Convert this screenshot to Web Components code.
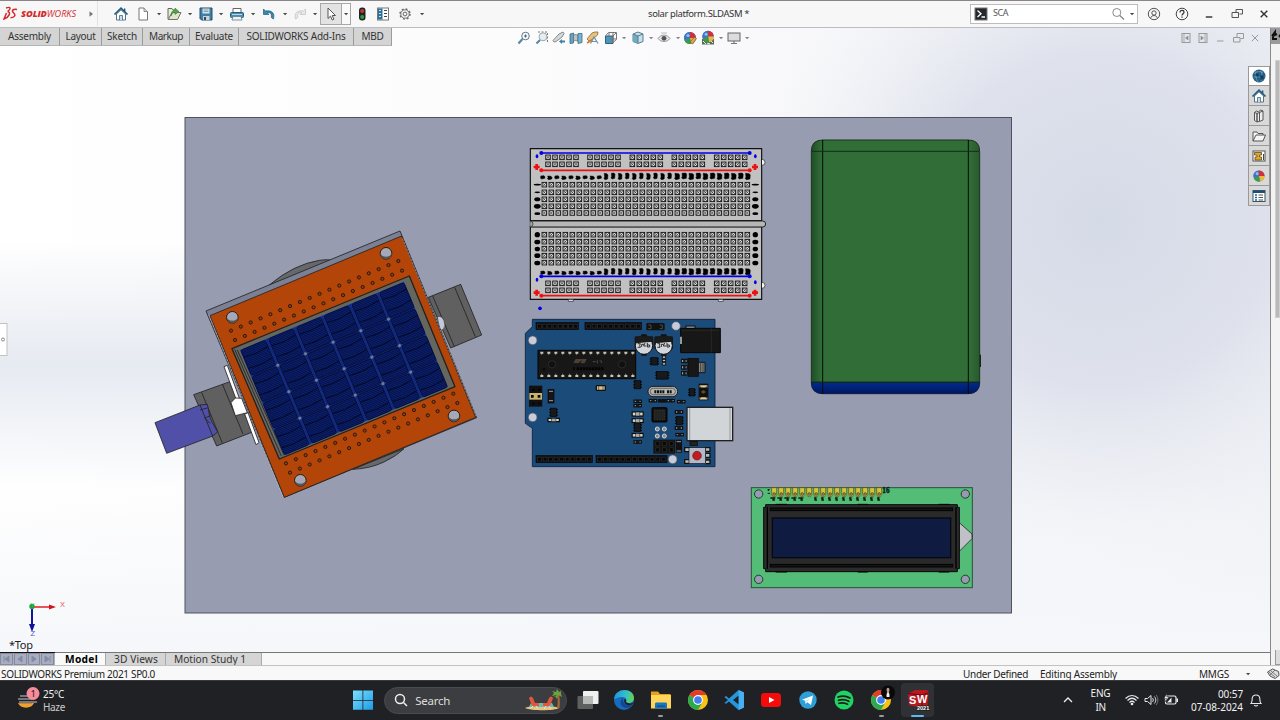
<!DOCTYPE html>
<html lang="en">
<head>
<meta charset="utf-8">
<title>solar platform.SLDASM - SOLIDWORKS</title>
<style>
html,body{margin:0;height:100%;overflow:hidden;font-family:"Noto Sans","Open Sans",sans-serif;font-size:10.5px;color:#222}
</style>
</head>
<body>
<cad-app></cad-app>
<script>
const define = (name, css, html, init) => {
  const t = document.createElement('template');
  t.innerHTML = `<style>:host{display:block;box-sizing:border-box}*{box-sizing:border-box}${css}</style>${typeof html === 'string' ? html : ''}`;
  customElements.define(name, class extends HTMLElement {
    connectedCallback() {
      if (this.shadowRoot) return;
      const r = this.attachShadow({ mode: 'open' });
      r.append(t.content.cloneNode(true));
      if (typeof html === 'function') r.innerHTML += html(this);
      if (init) init(this, r);
    }
  });
};

/* Label whose tracking is adjusted so that it takes a given width. */
define('ui-label', ':host{display:inline-block;white-space:nowrap;line-height:1.2}', '<span><slot></slot></span>', (el, r) => {
  const w = +el.getAttribute('w');
  if (!w) return;
  const nat = r.querySelector('span').getBoundingClientRect().width;
  el.style.letterSpacing = ((w - nat) / el.textContent.length) + 'px';
});

/* ---------- icons ---------- */
const ball = `<circle cx="9" cy="9" r="6" fill="#3f74c9"/><path d="M9 9V3a6 6 0 0 1 6 6z" fill="#d32f3a"/><path d="M9 9h6a6 6 0 0 1-5 5.900z" fill="#e8b93a"/><path d="M9 9L3.300 11A6 6 0 0 0 10 14.900z" fill="#3c9a4a"/><path d="M9 9V3a6 6 0 0 0-5.800 7.500z" fill="#3f74c9"/><circle cx="7" cy="6.500" r="1.600" fill="#fff" opacity=".5"/>`;
const chrome = `<circle cx="10" cy="10" r="10" fill="#fbc116"/><path d="M10 10L1.400 5A10 10 0 0 0 10 20l4.300-7.500z" fill="#2da94f"/><path d="M1.400 5A10 10 0 0 1 18.600 5H10v5z" fill="#e33b2e"/><circle cx="10" cy="10" r="4.900" fill="#fff"/><circle cx="10" cy="10" r="3.800" fill="#3f7ff0"/>`;
const ICONS = {
  home: `<path d="M4.500 9v6h9V9L9 4.800z" fill="#fff" stroke="#5d6f7c"/><path d="M2.500 9.500L9 3.200l6.500 6.300" fill="none" stroke="#1d5a80" stroke-width="1.700"/><path d="M7.500 15v-4.500h3V15" fill="#c5dcea" stroke="#356b8c" stroke-width=".8"/><path d="M12.600 3.500v3" stroke="#1d5a80" stroke-width="1.500"/>`,
  doc: `<path d="M5 3h5l3.500 3.500V15H5z" fill="#fff" stroke="#777"/><path d="M10 3v3.500h3.500" fill="#ddd" stroke="#777" stroke-width=".8"/>`,
  open: `<path d="M3 14V3.500h4L8 5h3v3" fill="#e9ead5" stroke="#666"/><path d="M3.200 14.500L7 7.500h9l-3.500 7z" fill="#dfe3cf" stroke="#707560"/><path d="M6 11c.5-4.500 2-6 4-6V3l4 3.500-4 3V7.500c-2 0-3 1-4 3.500z" fill="#51a545" stroke="#30702c" stroke-width=".5"/>`,
  save: `<path d="M3 3h12v12H4.500L3 13.500z" fill="#3f7ea5" stroke="#244f6d"/><rect x="5.500" y="3.500" width="7" height="5" fill="#d6e2e9"/><path d="M6.500 5h5M6.500 6.500h5" stroke="#6d8797" stroke-width=".7"/><rect x="6" y="11" width="6.500" height="4" fill="#c9d3d9"/><rect x="7" y="12" width="2" height="3" fill="#264c66"/>`,
  print: `<path d="M5 8V3.500h8V8" fill="#fff" stroke="#666"/><rect x="2.500" y="7.500" width="13" height="5" rx="1" fill="#4b8cb0" stroke="#255b7c"/><path d="M5 11.500h8l1 3.500H4z" fill="#eef3f5" stroke="#5f7d8e" stroke-width=".8"/><path d="M4 9.500h10" stroke="#b9d7e6"/>`,
  undo: `<path d="M3.500 4v5.500h5.500L7.300 7.900c3-.9 4.700.8 4 4.600l2 1.500c2-5-1-9.300-7.700-7.900z" fill="#3c86b0" stroke="#205d82" stroke-width=".7"/>`,
  redo: `<path d="M14.500 4v5.500H9l1.700-1.600c-3-.9-4.700.8-4 4.600l-2 1.500c-2-5 1-9.300 7.700-7.900z" fill="#e8e8e8" stroke="#c4c4c4" stroke-width=".8"/>`,
  cursor: `<path d="M6 3v10.500l2.500-2.400 1.700 3.900 1.700-.8-1.700-3.700H13.500z" fill="#fff" stroke="#555"/>`,
  traffic: `<rect x="6" y="2.500" width="6.500" height="13" rx="3" fill="#222"/><circle cx="9.200" cy="6" r="2" fill="#c2372d"/><circle cx="9.200" cy="12" r="2" fill="#2c9d4a"/>`,
  list: `<rect x="3.500" y="3" width="11" height="12" fill="#fff" stroke="#777"/><rect x="4" y="3.500" width="4.500" height="11" fill="#2d7099"/><path d="M10 5.500h3M10 8.500h3M10 11.500h3" stroke="#444"/><path d="M5 5.500h2M5 8.500h2M5 11.500h2" stroke="#cfe3ee"/>`,
  gear: `<circle cx="9" cy="9" r="5" fill="none" stroke="#666" stroke-width="1.500" stroke-dasharray="1.900 2.027"/><circle cx="9" cy="9" r="4.200" fill="#f7f7f7" stroke="#666" stroke-width=".9"/><circle cx="9" cy="9" r="1.900" fill="none" stroke="#666"/>`,
  caret: `<path d="M7 8h4.200L9.100 10.200z" fill="#444"/>`,
  tri: `<path d="M7.500 6.200L11 9l-3.500 2.800z" fill="#777"/>`,
  prompt: `<rect x="3" y="3" width="12" height="12" fill="#24282b" stroke="#777"/><path d="M5.500 5.500L9 8.700 5.500 12M9.500 12H13" fill="none" stroke="#fff" stroke-width="1.300"/>`,
  mag: `<circle cx="7.800" cy="7.500" r="4" fill="none" stroke="#888"/><path d="M10.800 10.500L15 14.500" stroke="#888" stroke-width="1.300"/>`,
  user: `<circle cx="9" cy="9" r="5.700" fill="none" stroke="#555"/><circle cx="9" cy="8" r="2.200" fill="none" stroke="#555"/><path d="M5.800 12.800c.8-3 5.600-3 6.400 0" fill="none" stroke="#555"/>`,
  help: `<circle cx="9" cy="9" r="5.800" fill="none" stroke="#444"/><path d="M7 7.500c0-2.800 4-2.600 4-.2 0 1.500-2 1.500-2 3.200M9 11.500v1.200" fill="none" stroke="#333" stroke-width="1.200"/>`,
  min: `<path d="M5.800 12h6.500" stroke="#444" stroke-width="1.600"/>`, rest: `<path d="M8 7.500V4.500h6.500v4.500h-3M4 7.500h6.500v5H4z" fill="none" stroke="#555"/>`,
  close: `<path d="M5.700 5.700l6.600 6.600M12.300 5.700l-6.600 6.600" stroke="#333" stroke-width="1.400"/>`,
  min2: `<path d="M6 12h6.500" stroke="#999"/>`, rest2: `<path d="M8 8V4.500h6.500v5h-3M4.500 8.500h6.500v4.500H4.500z" fill="none" stroke="#999"/>`,
  close2: `<path d="M5.800 5.800l6.400 6.400M12.200 5.800l-6.400 6.400" stroke="#999"/>`,
  dockl: `<rect x="5" y="4.500" width="8" height="9" fill="none" stroke="#999"/><path d="M7 4.500v9M11 7L8.500 9l2.500 2z" fill="#888" stroke="#999" stroke-width=".8"/>`,
  dockr: `<rect x="5" y="4.500" width="8" height="9" fill="none" stroke="#999"/><path d="M11 4.500v9M7 7l2.500 2L7 11z" fill="#888" stroke="#999" stroke-width=".8"/>`,
  zfit: `<path d="M3.500 14.500l4-4.500" stroke="#5589a5" stroke-width="2.200"/><circle cx="10.500" cy="7" r="3.800" fill="#f4f8fa" stroke="#678"/><path d="M9 7h3M10.500 5.500v3" stroke="#456" stroke-width=".9"/>`,
  zarea: `<path d="M5 3h9.500v10" fill="none" stroke="#777" stroke-dasharray="2 1.500"/><path d="M3.500 14.500l3.500-3.500" stroke="#5589a5" stroke-width="2.200"/><circle cx="10" cy="7.800" r="4" fill="#e3edf2" stroke="#9aa8b0"/>`,
  prev: `<path d="M3 11.500L9 5l4-2 1 1.500L12 8l-6 4.500-2 .5z" fill="#d5d9db" stroke="#888"/><path d="M9 12.500L12 10v1.500h3v2h-3V15z" fill="#4182a5"/>`,
  section: `<path d="M3 5l3.500-1v10L3 14.500z" fill="#62a4c2" stroke="#376b86" stroke-width=".8"/><path d="M6.500 6c2-1 3 0 4.500 0v6c-2 0-2.500-1-4.500 0z" fill="#b8c4ca" stroke="#666" stroke-width=".7"/><path d="M11 4.500h4v9l-4 1z" fill="#78b6d0" stroke="#376b86" stroke-width=".8"/>`,
  dyn: `<path d="M3 10l5-6 3-1 3 0-.500 3L9 10l-4 2z" fill="#edc078" stroke="#907450" stroke-width=".9"/><path d="M6.500 14.500l3.500-6.500 4 6.500M8 12.500h5" fill="none" stroke="#7190a0" stroke-width="1.200"/><path d="M3 14l5-3" stroke="#d77a36" stroke-width="1.500"/>`,
  orient: `<path d="M3.500 7h7.500v7.500H3.500z" fill="#4c95b8" stroke="#30627d"/><path d="M3.500 7l3-3.500h8v7l-3.500 3M7 4v3M14 4l-3 3M8 10h6M11 4v10" fill="none" stroke="#777"/>`,
  cube: `<path d="M4 5l5-2 5 2v7.500l-5 2-5-2z" fill="#c5e0eb" stroke="#5a7d8d"/><path d="M4 5l5 2v7.500l-5-2z" fill="#70abc5"/><path d="M4 5l5 2 5-2M9 7v7" fill="none" stroke="#5a7d8d"/>`,
  eye: `<path d="M3 9.500c3-4.500 9-4.500 12 0-3 4-9 4-12 0z" fill="#e4e4e4" stroke="#999"/><circle cx="9" cy="9.300" r="2.400" fill="#555"/><path d="M6 4h6" stroke="#bbb"/>`,
  app: ball + `<path d="M9 13l4.500-5 2 1.500-4 5.500z" fill="#d6aa54" stroke="#765a29" stroke-width=".7"/>`,
  scene: `<path d="M3 10h12v5.500H3z" fill="#5c6e59"/><path d="M4 12l3 3M8 14l3 1M12 12l2 2" stroke="#eee"/><g transform="translate(.5 -1)scale(.95)">${ball}</g>`,
  monitor: `<rect x="3" y="4" width="12" height="8" fill="#dcdcdc" stroke="#666"/><path d="M9 12v2.500M6 14.500h6" stroke="#777" stroke-width="1.200"/>`,
  globe: `<circle cx="9" cy="9" r="6.500" fill="#245f84"/><path d="M4 7c2-3 7-3 9-1M3.500 10h11M6 4c-1 4 0 8 2 11M11 4c2 4 1 8 0 10" fill="none" stroke="#83b1cc" stroke-width=".6"/><path d="M5 8l2-2 2 2-1 2zM10 9l3-1 1 3-3 2z" fill="#134060"/>`,
  library: `<path d="M4.500 5.500l2.500 1v8.500l-2.500-1.500zM7 6.500l2.500-1v8.500l-2.500 1zM9.500 5.500l3.500-1.500v9l-3.500 1.500z" fill="#eee" stroke="#555"/><path d="M4.500 5.500l2-1.500 2 1 2-2 2.500 1" fill="none" stroke="#555"/>`,
  folder: `<path d="M3 14V5h4l1 1.500h5V8M3 14l3-6h9.500L13 14z" fill="#f5f5f5" stroke="#555"/>`,
  palette: `<rect x="3" y="4" width="12" height="10" fill="#fff" stroke="#555"/><path d="M4.500 5.500h7v2.500h-2v2h2v3H5v-3h2v-2H4.500z" fill="#e6aa2a" stroke="#5c4820" stroke-width=".8"/><path d="M13.500 7v6" stroke="#444"/>`,
  ball: `<g transform="translate(.7 .7)scale(.92)">${ball}</g>`,
  props: `<rect x="3" y="3.500" width="12" height="11" fill="#fff" stroke="#31566d"/><path d="M3 5h12" stroke="#1f4f6e" stroke-width="2"/><path d="M5 8h2M5 10.500h2M5 13h2" stroke="#1f6b98" stroke-width="1.700"/><path d="M8.500 8H13M8.500 10.500H13M8.500 13H13" stroke="#555"/>`,
  tag: `<path d="M3.500 7l5-3 6 2.500.5 4-4 3-5-2.500z" fill="#ddd" stroke="#555"/><path d="M5 7l6 5M7 6l6 5M6 10l5-5" stroke="#666" stroke-width=".8"/>`,
  chev: `<path d="M5 11l4-4 4 4" fill="none" stroke="#eee" stroke-width="1.300"/>`,
  wifi: `<path d="M2.500 7.500c4-4 9-4 13 0M4.500 9.500c3-3 6-3 9 0M6.500 11.500c1.500-1.500 3.500-1.500 5 0" fill="none" stroke="#e8e8e8" stroke-width="1.200"/><circle cx="9" cy="13" r="1.300" fill="#eee"/>`,
  vol: `<path d="M3 7.500h2.500L9 4.500v9L5.500 10.500H3z" fill="none" stroke="#e8e8e8"/><path d="M10.500 7c1 1 1 3 0 4M12.300 5.500c2 2 2 5 0 7" fill="none" stroke="#ddd"/><path d="M14 4c2.500 3 2.500 7 0 10" fill="none" stroke="#777"/>`,
  batt: `<rect x="3.500" y="5" width="10.500" height="8" rx="1.500" fill="none" stroke="#eee" stroke-width="1.200"/><path d="M14.500 7.500h1.500V11h-1.500z" fill="#eee"/><path d="M9.500 6.500v5H5z" fill="#eee"/><path d="M5 2.500L2 7.500h2.500L3 11l4-5H4.700z" fill="#fff" stroke="#202124" stroke-width=".5"/>`,
  bell: `<path d="M4 12.500c1.300-1.500 1-3 1.200-5.200.5-4.500 7.100-4.500 7.600 0 .2 2.200-.1 3.700 1.200 5.200zM7.300 14c.6 1.300 2.800 1.300 3.400 0" fill="none" stroke="#e8e8e8" stroke-width="1.100"/>`
};
const BIG = {
  start: `<defs><linearGradient id="g" x2="1" y2="1"><stop stop-color="#7be0fb"/><stop offset="1" stop-color="#1c9bea"/></linearGradient></defs><path d="M0 .5h9.500V10H0zM10.300.5H20V10h-9.700zM0 10.800h9.500v9H0zM10.300 10.800H20v9h-9.700z" fill="url(#g)"/>`,
  tasks: `<rect x="5" y="1" width="15.500" height="13" rx="1" fill="#f0f0f0"/><rect x="-.5" y="6" width="15.500" height="13" rx="1" fill="#666" opacity=".9"/><rect x="5" y="6" width="10" height="8" fill="#b9b9b9"/>`,
  edge: `<defs><linearGradient id="g" x1="0" y1=".2" x2="1" y2=".4"><stop stop-color="#2290dc"/><stop offset=".6" stop-color="#35c1c8"/><stop offset="1" stop-color="#5fd35b"/></linearGradient></defs><circle cx="10" cy="10" r="10" fill="#176bbd"/><path d="M0 10C0-3 20-3 20 8c0 5-6 6-8 4 1-2 .5-5-3.500-5C4 7 0 9 0 10z" fill="url(#g)"/><path d="M9 8c-5 4-2 10 4 10 3 0 5-2 5.500-3.500C14 16.500 8 14 9 8z" fill="#114a91"/><path d="M12 12c2 2 5.500 1.500 8 .5-1 2-4 3-6.500 2.500-3-.7-4-4-3-6 1.500 0 2 1.500 1.500 3z" fill="#202124"/>`,
  files: `<path d="M0 1.500h7l2 2.500h10.500V18H0z" fill="#e3a21a"/><path d="M0 5h20v13.500H0z" fill="#ffd45a"/><path d="M4 18.500v-4.500c0-1 .7-1.500 1.500-1.500h9c.8 0 1.500.5 1.500 1.500v4.500z" fill="#1b75bd"/><path d="M6 15.500h8v1.500H6z" fill="#0d5797"/>`,
  chrome,
  code: `<path d="M14.500 0L20 2.500v15L14.500 20 5 11.500l-3 2.300L.3 13 4 10 .3 7 2 6l3 2.500zM14.700 5.500L9 10l5.700 4.500z" fill="#2496dd" fill-rule="evenodd"/><path d="M14.700 0L20 2.500v15L14.700 20z" fill="#45b0f2"/>`,
  youtube: `<rect y="3" width="20" height="14" rx="3.500" fill="#f60b0b"/><path d="M8 7l5.500 3L8 13z" fill="#fff"/>`,
  telegram: `<circle cx="10" cy="10" r="8.700" fill="#2f9fd8"/><path d="M4 9.800L15 5.500l-2 9.500-3.700-2.700L7.500 14l-.3-3.200z" fill="#fff"/><path d="M7.500 11l5.300-3.500-4 4z" fill="#b7dcf0"/>`,
  spotify: `<circle cx="10" cy="10" r="9.500" fill="#20d363"/><path d="M4 7c4-1.300 8.500-1 12 1M4.500 10.300c3.500-1 7-.7 10.300 1M5 13.300c3-.8 6-.6 8.500.9" fill="none" stroke="#171b19" stroke-width="1.700" stroke-linecap="round"/>`,
  chrome2: chrome + `<circle cx="17" cy="2.500" r="7" fill="#090909"/><path d="M15.500 0c0-3 3-3 3 0l-.5 2 .5 4h-3l.5-4z" fill="#b69b91"/><path d="M16 3h2l.5 4h-3z" fill="#eee"/>`,
  sw: `<path d="M0 3.500L7 0h12.500l1 3-1 13-5 2.500L1 15z" fill="#b81820"/><path d="M0 3.500L14 5l6-2M14 5v12" fill="none" stroke="#63070d"/><text x="1" y="14" font-family="Liberation Sans" font-weight="700" font-size="11" fill="#fff">S</text><text x="9" y="13" font-family="Liberation Sans" font-weight="700" font-size="11" fill="#fff">W</text><text x="9" y="19.500" font-family="Liberation Sans" font-weight="700" font-size="5.500" fill="#fff" stroke="#222" stroke-width="1.500" paint-order="stroke">2021</text>`,
  beach: `<path d="M-7 18c5-3 28-3 34 0-4 3-28 3-34 0z" fill="#e9c07c"/><path d="M-1 13h21l2 4H-3z" fill="#63bcbb"/><path d="M25 18c1-5 1-8 0-13l2-.5c1 5 1 9 .5 13.500z" fill="#a66c34"/><path d="M25 5L20 6l2-3-2-2 4 1 1-3 2 3 2-1v3l1 3-4-2-1 4-2-3-2 2z" fill="#6aa33b"/><path d="M-3 8q2-3 4 0l2 5 4 0 0 3H0zM21 8q-2-3-4 0l-2 5h-4v3h7z" fill="#e2563b"/><path d="M-2 19l3-3M6 19l-2-3M19 19l-2-3M12 19l2-3" stroke="#efe3cf"/>`
};
define('sw-icon', ':host{display:flex;justify-content:center;align-items:center;flex:none;width:18px}svg{display:block;flex:none;overflow:visible}', el =>
  `<svg width="18" height="18" viewBox="0 0 18 18">${ICONS[el.getAttribute('name')]}</svg>`, el => { if (el.getAttribute('w')) el.style.width = el.getAttribute('w') + 'px'; });

const icons = s => s.split(' ').map(p => { const [n, w] = p.split(':'); return `<sw-icon name="${n}" w="${w}"></sw-icon>`; }).join('');

define('title-bar', `
:host{display:flex;height:28px;background:#f7f7f7;border-top:1px solid #89868a;border-bottom:1px solid #bdbdc0;align-items:center;color:#333;padding-bottom:1px}
.brand{display:flex;flex:none;width:98px;height:25px;align-items:center;border-right:1px solid #e3e3e3;padding-left:3px;color:#d4282c;font:italic 9.200px "Open Sans",sans-serif}
.brand b{font-weight:800}.brand svg{margin-right:3px;flex:none}.brand ui-label{flex:none;width:54px}.brand sw-icon{margin-left:7px}
.tools{display:flex;flex:none;align-items:center;height:22px;padding-left:12px}
.sel{display:flex;height:22px;border:1px solid #a8a8a8;background:#e3e3e3;width:31px}.sel sw-icon+sw-icon{border-left:1px solid #a8a8a8;background:#fafafa}
.name{margin-left:221px;width:322px;flex:none;font-size:9.500px}
.search{display:flex;flex:none;align-items:center;width:168px;height:20px;border:1px solid #bdbdbd;background:#fff;font-size:9px;color:#555;padding-left:1px}
.search ui-label{margin:0 101px 0 3px;width:15px}
`, `<div class="brand"><svg width="15" height="15" viewBox="0 0 15 15"><path d="M3 2c4-1.500 6 0 1.500 3.500M4.500 5.500c4 .5 1.500 6-3.500 7.500L3.500 7M14 3.500c-3.500-1-6 1-3.500 3.200s1.500 5-3 5" fill="none" stroke="#d4282c" stroke-width="1.500"/></svg><ui-label w="55"><b>SOLID</b>WORKS</ui-label><sw-icon name="tri" w="18"></sw-icon></div>
<div class="tools">${icons('home:22 doc:22 caret:10 open:20 caret:11 save:21 caret:10 print:22 caret:10 undo:21 caret:11 redo:20 caret:10')}<div class="sel">${icons('cursor:20 caret:9')}</div>${icons('traffic:21 list:22 gear:22 caret:11')}</div>
<div class="name"><ui-label w="101">solar platform.SLDASM *</ui-label></div>
<div class="search"><sw-icon name="prompt" w="18"></sw-icon><ui-label w="15">SCA</ui-label>${icons('mag:18 caret:10')}</div>
${icons('user:31 help:25 min:29 rest:27 close:27')}`);

define('command-tabs', `
:host{display:flex;height:18px}
div{display:flex;align-items:center;justify-content:center;background:#d4d4d4;border-right:1px solid #9b9b9b;border-bottom:1px solid #b5b5b5;color:#333;font-size:10px;padding-bottom:1px}`,
  [['Assembly', 60, 43], ['Layout', 42, 30], ['Sketch', 41, 30], ['Markup', 47, 34], ['Evaluate', 49, 38], ['SOLIDWORKS Add-Ins', 115, 99], ['MBD', 38, 22]]
    .map(([t, w, l]) => `<div style="width:${w}px"><ui-label w="${l}">${t}</ui-label></div>`).join(''));

define('view-toolbar', ':host{display:flex;height:20px;align-items:center}.mute{display:flex;opacity:.65}',
  icons('zfit:18 zarea:17 prev:17 section:17 dyn:18 orient:18') + `<span class="mute">${icons('caret:8')}</span>` + icons('cube:19') + `<span class="mute">${icons('caret:7')}</span>` + icons('eye:20') + `<span class="mute">${icons('caret:7')}</span>` + icons('app:18 scene:17') + `<span class="mute">${icons('caret:9')}</span>` + icons('monitor:18') + `<span class="mute">${icons('caret:8')}</span>`);

define('task-pane', `:host{width:22px;border:1px solid #999;border-bottom:0}div{height:20px;background:#d9d9d9;border-bottom:1px solid #999;display:flex;justify-content:center;align-items:center}div:first-of-type{background:#fff;height:19px}`,
  'globe home library folder palette ball props'.split(' ').map(n => `<div><sw-icon name="${n}"></sw-icon></div>`).join(''));

/* ---------- model parts, drawn at three units per pixel ---------- */
const range = n => [...Array(n).keys()];
const part = (x, y, s) => `<g transform="translate(${x} ${y}) scale(.33333)">${s}</g>`;

function solar() {
  const row = (x1, y1, x2, y2) => range(18).map(i => `<circle cx="${x1 + (x2 - x1) * i / 17}" cy="${y1 + (y2 - y1) * i / 17}" r="4.800" fill="#8c4218" stroke="#27140a" stroke-width="2.800"/>`).join('');
  let cells = '';
  for (let c = 0; c < 6; c++) for (let r = 0; r < 4; r++) {
    const x = c * 90, y = r * 86;
    cells += `<rect x="${x + 5}" y="${y + 2}" width="80" height="82" rx="7" fill="url(#cell)" stroke="#04092a" stroke-width="2"/>
    <path d="M${x + 6} ${y + 25}l38 3 40-5M${x + 6} ${y + 61}l38 3 40-5" stroke="#02061c" stroke-width="2.500" fill="none"/>`;
  }
  let nodes = '';
  for (let c = 1; c < 6; c++) {
    nodes += `<path d="M${c * 90} 2V340" stroke="#0b1b5e" stroke-width="1.500"/>`;
    for (let r = 1; r < 4; r++) nodes += `<circle cx="${c * 90}" cy="${r * 86}" r="4.500" fill="#777c84"/>`;
  }
  return `<g stroke="#222" stroke-width="2.500" stroke-linejoin="round">
  <path d="M358 195Q430 134 508 121 526 118 542 120L450 190zM608 748Q660 746 702 726 740 708 762 686z" fill="#67686b"/>
  <path d="M835 232L932 193 995 345 902 384z" fill="#606060"/><path d="M914 202L976 350M848 228l65 152" fill="none"/>
  <path d="M862 290q14-4 20 12t-2 26l-10 4z" fill="#c5c9db" stroke-width="1.500"/>
  <path d="M131 524L240 485 310 635 200 678z" fill="#606060"/><path d="M155 517l62 152M217 492l62 150" fill="none"/>
  <path d="M15 608L150 555 172 553 180 592 187 608 203 636 188 648 50 700z" fill="#5050a8"/><path d="M150 555l38 93M150 570l22-6M180 610l-16-16 18-7" fill="none"/>
  <path d="M222 440l10-4 38 104-9 5zM284 582l10-4 33 90-9 6z" fill="#fff"/>
  <path d="M243 548L256 534 275 535 292 578 256 587z" fill="#fff"/>
  <path d="M168 273L750 33 757 50 980 593 403 832z" fill="#7b8095"/>
  <path d="M180 287L755 48 977 592 403 832z" fill="#b34508"/>
  <path d="M176 284L399 830M757 55L978 588" fill="none" stroke="#cdd0da" stroke-width="1.500" stroke-dasharray="8 3"/>
  <path d="M246 386L778 168 915 500 388 717z" fill="#65675f" stroke-width="4"/>
  <path d="M254 388L394 708M262 390L402 704" fill="none" stroke="#222"/></g>
  ${row(243, 332, 745, 123)}${row(255, 360, 756, 152)}${row(408, 730, 910, 521)}${row(420, 758, 922, 549)}
  ${[[247, 292], [708, 100], [912, 588], [451, 781]].map(([x, y]) => `<circle cx="${x}" cy="${y}" r="17.500" fill="#a5a8b8" stroke="#2b1a12" stroke-width="3"/><path d="M${x - 17} ${y}a17 17 0 0 0 34 0a18 15 0 0 1-34 0z" fill="#555"/>`).join('')}
  <g transform="matrix(.923 -.384 .386 .923 267 391)"><path d="M3 0H536V342H3z" fill="#15308e"/>${cells}${nodes}</g>`;
}

function breadboard() {
  const hole = (x, y) => `<use href="#hole" x="${x}" y="${y}"/>`;
  let s = `<path d="M31 26H725V242H31zM31 260H725V478H31z" fill="#c1c1c1" stroke="#111" stroke-width="3.500"/><path d="M31 243H728a9 9 0 0 1 0 18H31z" fill="#b6b6b6" stroke="#222" stroke-width="3"/><path d="M31 244a8 8 0 0 1 0 16" fill="#aaa" stroke="#222" stroke-width="2"/>
  <g fill="#f5f5f5" stroke="#222" stroke-width="2"><path d="M726 58a9 9 0 0 1 0 18M726 427a9 9 0 0 1 0 18M145 479v5h15v-5M595 479v5h15v-5"/></g>`;
  for (const y of [134, 157, 178, 199, 219, 284, 305, 326, 347, 368]) for (let i = 0; i < 30; i++) s += hole(73 + i * 21, y);
  for (const y of [52, 73, 430, 451]) for (const x of [84, 210, 337, 463, 590]) for (let i = 0; i < 5; i++) s += hole(x + i * 21, y);
  for (let i = 0; i < 30; i++) {
    const b = i > 8, w = b ? (i > 18 ? 14 : 11) : 13, h = b ? 16 : 8;
    for (const y of [107, 393]) s += `<path stroke="#000" stroke-width="1.500" d="M${62 + i * 21.200} ${y + (b ? -7 : 1)}l${w - 3} ${i % 2 ? 1 : -1} 3 4-1 ${h - 4}-${w - 4} 2-4-3 2-${h / 3}z"/>`;
  }
  const lab = [[134, 11, 2.500], [157, 9, 2.500], [178, 9, 6], [199, 10, 7], [221, 9, 4], [284, 8, 8], [306, 9, 7], [327, 8, 7], [347, 9, 7], [369, 9, 7]];
  for (const [y, rx, ry] of lab) s += `<ellipse cx="52" cy="${y}" rx="${rx}" ry="${ry}"/><ellipse cx="706" cy="${y}" rx="${rx}" ry="${ry}"/>`;
  for (const [y, c] of [[39, '#0000e6'], [91, '#ee1010'], [409, '#0000e6'], [467, '#ee1010']]) s += `<path d="M64 ${y}H689" stroke="${c}" stroke-width="5"/><circle cx="64" cy="${y}" r="6" fill="${c}"/><circle cx="689" cy="${y}" r="6" fill="${c}"/>`;
  for (const [x, y] of [[50, 81], [705, 81], [50, 458], [705, 458]]) s += `<path d="M${x - 9} ${y}h18M${x} ${y - 9}v18" stroke="#ee1010" stroke-width="8"/>`;
  for (const [x, y] of [[51, 49], [706, 49], [51, 419], [706, 427]]) s += `<ellipse cx="${x}" cy="${y}" rx="4" ry="6" fill="#0000e6"/>`;
  return s + '<circle cx="60" cy="505" r="5.500" fill="#0000e6"/>';
}

function arduino() {
  const strip = (x, y, w, n) => `<rect x="${x}" y="${y}" width="${w}" height="21" fill="#141414" stroke="#050505" stroke-width="2"/>` + range(n).map(i => `<rect x="${x + 5 + i * (w - 3) / n}" y="${y + 5}" width="11" height="11" fill="#070707" stroke="#303030" stroke-width="1.500"/>`).join('');
  const smd = (x, y, w = 24, h = 10, f = '#d8d4c8') => `<rect x="${x - w / 2}" y="${y - h / 2}" width="${w}" height="${h}" fill="${h < 9 ? '#8d98a0' : f}" stroke="#0b0b0b" stroke-width="3.500"/><rect x="${x - w / 5}" y="${y - h / 2}" width="${w / 2.500}" height="${h}" fill="${w > 30 ? '#aaa' : '#1b1b1b'}" stroke="#111" stroke-width="1.500"/>`;
  const ic = (x, y, w, h) => `<path d="M${x - w / 2 - 4} ${y - h / 3}h${w + 8}M${x - w / 2 - 4} ${y}h${w + 8}M${x - w / 2 - 4} ${y + h / 3}h${w + 8}" stroke="#0a0a0a" stroke-width="4"/><rect x="${x - w / 2}" y="${y - h / 2}" width="${w}" height="${h}" fill="#161a1d" stroke="#050505" stroke-width="2"/>`;
  const cap = x => `<rect x="${x - 28}" y="79" width="56" height="38" rx="4" fill="#171717"/><circle cx="${x}" cy="107" r="26" fill="#d3d7dc" stroke="#111" stroke-width="3"/><path d="M${x - 27} 100a27 22 0 0 1 54-5z" fill="#1b1b1b"/><path d="M${x - 19} 101h8l-2 5 2 6h-8M${x - 7} 111v-8h7M${x + 3} 99l-4 9h8M${x + 10} 99v12h7v-6h-7" stroke="#111" fill="none" stroke-width="2.500"/><path d="M${x - 8} 73h16v6h-16zM${x - 8} 133h16v4h-16z" fill="#111"/>`;
  return `<path d="M52 28H600V470H52V355L31 340V70L52 50z" fill="#1b4b78" stroke="#0b2038" stroke-width="2.500"/>
  ${strip(63, 38, 127, 8)}${strip(210, 38, 169, 10)}${strip(63, 437, 169, 10)}${strip(243, 437, 213, 12)}
  ${[[53, 91], [483, 48], [53, 322], [473, 448]].map(([x, y]) => `<circle cx="${x}" cy="${y}" r="13" fill="#c9ccd6" stroke="#556" stroke-width="2"/>`).join('')}
  <rect x="394" y="39" width="55" height="22" rx="3" fill="#111"/><path d="M400 45h8v11h-8M434 45h8v11h-8" stroke="#6b6450" stroke-width="2" fill="none"/><rect x="513" y="48" width="27" height="8" fill="#8d98a0" stroke="#111" stroke-width="3"/>
  ${cap(387)}${cap(446)}
  <rect x="69" y="121" width="293" height="85" fill="#171717" stroke="#050505" stroke-width="3"/>
  ${range(14).map(i => `<path d="M${76 + i * 21} 125h9v6h-3l-1.500 5-1.500-5h-3zM${76 + i * 21} 201h9v-6h-3l-1.500-5-1.500 5h-3z" fill="#c6c2b4"/>`).join('')}
  <circle cx="111" cy="163" r="11" fill="#101010" stroke="#353535" stroke-width="2"/><circle cx="321" cy="163" r="11" fill="#101010" stroke="#353535" stroke-width="2"/><circle cx="87" cy="178" r="4" fill="#090909"/><path d="M175 158l7-11h33l-6 13h-12l3-9-10 9z" fill="#4a4035"/><path d="M233 155h9m5-4v9m7-7h5v6" stroke="#666" stroke-width="2"/><path d="M174 176h5m6 0h82" stroke="#050505" stroke-width="9" stroke-dasharray="7 2"/>
  <path d="M497 55H616V128H497z" fill="#171717" stroke="#080808" stroke-width="3"/><path d="M589 55v73M500 61h112" stroke="#2f2f2f" stroke-width="2"/><path d="M498 80v22" stroke="#ddd" stroke-width="4"/>
  ${ic(418, 154, 20, 22)}${ic(442, 196, 34, 23)}${[142, 152, 162].map(y => `<rect x="442" y="${y - 4}" width="10" height="7" fill="#bbb" stroke="#111" stroke-width="2.500"/>`).join('')}
  ${smd(508, 153, 16, 10)}${smd(508, 172, 16, 10)}${smd(508, 190, 16, 10)}<rect x="519" y="145" width="31" height="54" fill="#171717" stroke="#080808" stroke-width="2"/><path d="M550 157h20v31h-20z" fill="#85857f" stroke="#111" stroke-width="3"/><path d="M557 157v31M564 157v31" stroke="#333" stroke-width="2.500"/>
  ${ic(368, 224, 18, 25)}<rect x="244" y="227" width="27" height="14" rx="2" fill="#d8c38e" stroke="#111" stroke-width="4"/><path d="M251 228v12m13-12v12" stroke="#333" stroke-width="2"/>
  <rect x="399" y="229" width="89" height="31" rx="15" fill="#aaa" stroke="#181818" stroke-width="3"/><rect x="406" y="235" width="75" height="19" rx="9" fill="#b5b5b2" stroke="#444" stroke-width="2"/><path d="M418 245h31m7 0h16" stroke="#111" stroke-width="9" stroke-dasharray="6 2"/>
  ${ic(531, 247, 15, 22)}<rect x="551" y="221" width="29" height="50" fill="#111"/><path d="M554 229h23M554 265h23" stroke="#e0cf9b" stroke-width="7"/><path d="M557 229v7h17v-7M557 265v-8h17v8" stroke="#111" stroke-width="2" fill="none"/><path d="M557 246l8-6 8 6-8 5z" fill="#5d4c27"/>
  <rect x="42" y="227" width="40" height="63" fill="#111"/><rect x="43" y="249" width="38" height="20" fill="#c7b26f"/><path d="M51 236h8v6h-8zM69 236h8v6h-8zM48 255h8v8h-8zM68 255h8v8h-8zM51 278h8v5h-8zM69 278h8v5h-8z" fill="#050505"/>
  <rect x="99" y="238" width="18" height="41" fill="#161616" stroke="#080808" stroke-width="2"/><path d="M102 244h12M102 272h12" stroke="#bbb" stroke-width="2.500"/>
  ${ic(116, 307, 18, 25)}${smd(116, 330, 34, 10)}
  ${smd(368, 274, 22, 7)}${smd(368, 287, 22, 7)}${smd(368, 312, 33, 12)}${smd(368, 332, 33, 11)}${ic(368, 353, 18, 24)}${smd(368, 376, 33, 11)}${smd(368, 396, 22, 7)}
  ${smd(414, 272, 22, 7)}<rect x="429" y="267" width="26" height="11" fill="#111"/>${smd(467, 272, 22, 7)}${smd(499, 275, 22, 7)}
  <rect x="411" y="293" width="45" height="43" rx="3" fill="#101010" stroke="#030303" stroke-width="3"/><rect x="418" y="300" width="31" height="29" fill="#232323" stroke="#554539" stroke-width="2" stroke-dasharray="4 4"/>
  ${smd(492, 306, 22, 8)}${ic(493, 332, 18, 25)}${smd(492, 354, 22, 8)}${smd(494, 374, 22, 7)}
  ${[[427, 357], [448, 357], [427, 378], [448, 378]].map(([x, y]) => `<circle cx="${x}" cy="${y}" r="6" fill="#888" stroke="#d4d4d4" stroke-width="3"/>`).join('')}
  <rect x="415" y="389" width="65" height="42" fill="#141414"/>${[422, 442, 463].map(x => `<path d="M${x} 394h12v13h-12zM${x} 413h12v13h-12z" fill="#080808" stroke="#34302b" stroke-width="2"/>`).join('')}
  <rect x="482" y="389" width="19" height="39" fill="#111"/><path d="M485 395h13M485 423h13" stroke="#999" stroke-width="3"/>
  <rect x="516" y="292" width="137" height="100" fill="#d2d5d8" stroke="#202020" stroke-width="4"/><path d="M524 294v96M645 294v96" stroke="#777b80" stroke-width="2"/>
  <rect x="525" y="394" width="23" height="13" fill="#222" stroke="#080808" stroke-width="2"/><path d="M509 413h16v12h-16zM509 449h16v11h-16zM571 430h14v12h-14zM571 450h14v11h-14zM571 413h14v11h-14z" fill="#bbb" stroke="#111" stroke-width="4"/><rect x="522" y="413" width="50" height="48" fill="#b4b8c8" stroke="#111" stroke-width="2"/><circle cx="546" cy="437" r="13" fill="#c11b20" stroke="#65191b" stroke-width="2"/>`;
}

const lcd = () => `<rect x="34" y="38" width="663" height="300" fill="#53bd78" stroke="#28523a" stroke-width="3"/>
  ${[[56, 57], [676, 57], [56, 313], [676, 313]].map(([x, y]) => `<circle cx="${x}" cy="${y}" r="12.500" fill="#969bb2" stroke="#253a2c" stroke-width="3"/>`).join('')}
  ${range(16).map(i => `<path d="M${95 + i * 21} 38h15v20l-4 7h-7l-4-7z" fill="#d6c33c" stroke="#554f15" stroke-width="2"/><circle cx="${102.500 + i * 21}" cy="57" r="4" fill="#9b9a83" stroke="#34300f" stroke-width="2"/>${i == 5 ? '' : `<path d="M${(i < 5 ? 91 : 96) + i * 21} 69l${i < 5 ? 15 : 8} 0M${97 + i * 21} 75h8M${100 + i * 21} 67v10" stroke="#101b14" stroke-width="4"/>`}`).join('')}
  <path d="M83 44h6M85 43v5M83 55h7" stroke="#111" stroke-width="3"/><text x="427" y="54" font-family="Liberation Serif" font-size="22" font-weight="700" fill="#081a10" stroke="#081a10">16</text>
  <path d="M657 142L696 177V191L657 230z" fill="#bfc1c6" stroke="#252525" stroke-width="2.500"/>
  <path d="M77 89H652V97H658V281H652V290H77V281H71V97H77z" fill="#2b2c2b" stroke="#080808" stroke-width="3"/>
  <path d="M107 88h34M353 88h30M596 88h32M107 291h34M353 291h30M596 291h32" stroke="#000" stroke-width="3"/>
  <path d="M82 96V281M648 96V281" stroke="#000" stroke-width="4"/><rect x="91" y="99" width="547" height="8" fill="#141414" stroke="#000" stroke-width="3"/><rect x="91" y="268" width="547" height="8" fill="#141414" stroke="#000" stroke-width="3"/><rect x="85" y="110" width="559" height="156" fill="#292a29"/>
  <rect x="97" y="129" width="535" height="119" fill="#0f1b40" stroke="#050914" stroke-width="4"/>`;

const battery = () => `<defs><linearGradient id="bat"><stop stop-color="#204d28"/><stop offset=".06" stop-color="#316d37"/><stop offset=".94" stop-color="#316d37"/><stop offset="1" stop-color="#28592d"/></linearGradient><linearGradient id="blu" x2="0" y2="1"><stop stop-color="#002b8e"/><stop offset="1" stop-color="#001760"/></linearGradient></defs>
  <rect x="538" y="674" width="5" height="37" fill="#172019"/>
  <path d="M34 757V64Q34 30 68 30H505Q539 30 539 64V757z" fill="url(#bat)" stroke="#18351c" stroke-width="3"/>
  <path d="M34 757H539Q539 791 505 791H68Q34 791 34 757z" fill="url(#blu)" stroke="#0b193f" stroke-width="3"/>
  <path d="M68 30V791M505 30V791" stroke="#050a06" stroke-width="3"/><path d="M35 64H538M35 757H538" stroke="#142d19" stroke-width="3"/>`;

define('model-scene', ':host{overflow:hidden}svg{display:block}', () => `<svg width="1270" height="624" viewBox="0 28 1270 624">
<defs>
<linearGradient id="base" x2="1" y2="0"><stop stop-color="#fff"/><stop offset=".4" stop-color="#fcfcfd"/><stop offset="1" stop-color="#f1f2f6"/></linearGradient>
<radialGradient id="r1"><stop stop-color="#d5dae7"/><stop offset=".5" stop-color="#d9dde9" stop-opacity=".8"/><stop offset="1" stop-color="#e6e9f1" stop-opacity="0"/></radialGradient>
<linearGradient id="l1" x2="0" y2="1"><stop stop-color="#e6eaf1" stop-opacity="0"/><stop offset=".5" stop-color="#e6eaf1"/><stop offset="1" stop-color="#e6eaf1" stop-opacity="0"/></linearGradient>
<linearGradient id="b1" x2="0" y2="1"><stop stop-color="#f5f6f9" stop-opacity="0"/><stop offset="1" stop-color="#f5f7fa"/></linearGradient>
<pattern id="cell" width="5" height="5" patternUnits="userSpaceOnUse"><rect width="5" height="5" fill="#0c2070"/><path d="M0 1h5" stroke="#030b33" stroke-width="2"/></pattern>
<g id="hole"><rect x="-6.800" y="-6.800" width="13.600" height="13.600" fill="#dedede" stroke="#151515" stroke-width="2.800"/><path d="M-5-5L5 5M5-5L-5 5" stroke="#252525" stroke-width="2"/></g>
</defs>
<rect y="28" width="1270" height="624" fill="url(#base)"/>
<ellipse cx="1100" cy="220" rx="340" ry="330" fill="url(#r1)"/>
<rect y="240" width="190" height="250" fill="url(#l1)"/>
<rect y="480" width="1270" height="172" fill="url(#b1)"/>
<rect x="185" y="117.500" width="826.500" height="495.500" fill="#989cb0" stroke="#50525f"/>
${part(150, 220, solar())}${part(520, 140, breadboard())}${part(515, 310, arduino())}${part(800, 130, battery())}${part(740, 475, lcd())}
<path d="M32 607H51" stroke="#e01c24" stroke-width="1.500"/><path d="M49 604.500L56 607l-7 2.500z" fill="#d3131b"/><path d="M32 607V625" stroke="#1214a0" stroke-width="2"/><path d="M29 624h6l-3 8z" fill="#10129a"/><circle cx="32" cy="606.500" r="2.700" fill="#23a33a"/>
<g font-family="Liberation Sans" font-size="7.500"><text x="60" y="607" fill="#ef5057">X</text><text x="30.500" y="635.500" fill="#5056dc">Z</text><text x="30.500" y="607" font-size="6" fill="#38bd47">Y</text></g>
<text x="9" y="649" font-family="Noto Sans" font-size="11" textLength="24" fill="#222">*Top</text>
<rect x="-1" y="323.500" width="8" height="32" fill="#fff" stroke="#c2c2c2"/><circle cx="3" cy="339.500" r="1.500" fill="none" stroke="#888"/>
</svg>`);

define('cad-viewport', `
:host{display:grid;width:1270px;height:624px}
model-scene,.over{grid-area:1/1}
.over{display:flex;flex-direction:column;z-index:1;width:1270px}
.row{display:flex;align-items:flex-start;height:38px}view-toolbar{margin-left:123px}
.ctl{display:flex;height:20px;align-items:center;margin-left:auto;padding-right:6px}
task-pane{align-self:flex-end}
`, `<model-scene></model-scene><div class="over"><div class="row"><command-tabs></command-tabs><view-toolbar></view-toolbar><div class="ctl">${icons('dockl:17 dockr:17 min2:18 rest2:17 close2:18')}</div></div><task-pane></task-pane></div>`);

define('model-tabs', `
:host{display:flex;height:13px;width:1270px;background:#f8f8f8;border-top:1px solid #777;font-size:10.200px}
.nav{display:flex;width:55px;border-top:1px solid #111;background:#a9adc0;margin-top:-1px}.nav i{display:flex;align-items:center;justify-content:center;flex:1;border:1px solid #858a9e;margin-right:1px}
.t{display:flex;align-items:center;background:#d5d5d5;border-right:1px solid #aaa;color:#333;height:12px;padding-left:8px}.t:nth-of-type(2){background:#fafafa;color:#000;font-weight:700;padding-left:10px}
`, `<div class="nav">${['M2 1v6M7 1L3 4l4 3z', 'M6 1L2 4l4 3z', 'M2 1l4 3-4 3z', 'M1 1l4 3-4 3zM6 1v6'].map(d => `<i><svg width="8" height="8"><path d="${d}" fill="#858ba4" stroke="#858ba4"/></svg></i>`).join('')}</div>
<div class="t" style="width:51px"><ui-label w="33">Model</ui-label></div><div class="t" style="width:60px"><ui-label w="44">3D Views</ui-label></div><div class="t" style="width:96px"><ui-label w="72">Motion Study 1</ui-label></div>`);

define('side-scroll', `
:host{display:flex;flex-direction:column;width:10px;height:637px;background:#f3f3f3;border-left:1px solid #888}
.cap{height:16px;background:#9a9a9a;overflow:hidden}.thumb{margin:16px 0 0 4px;height:258px;background:#b9b9b9;border:1px solid #cfcfcf}
.end{margin:auto 0 0 4px;height:15px;background:#ddd;border:1px solid #999;border-right:0;border-top:0}
`, `<div class="cap"><svg width="10" height="16"><path d="M1 8l3-4v3l2-1M2 6v5h4M8 8l3-2M8 8l3 2" stroke="#111" stroke-width="2" fill="none"/></svg></div><div class="thumb"></div><div class="end"></div>`);

define('status-bar', `
:host{display:flex;align-items:center;height:15px;background:#f8f8f8;border-top:1px solid #c2c2c2;padding-left:1px;padding-top:2px;color:#222;font-size:10px;white-space:nowrap}
.a{width:962px}.b{width:77px}.c{width:159px}.d{width:39px}`,
  `<div class="a"><ui-label w="154">SOLIDWORKS Premium 2021 SP0.0</ui-label></div><div class="b"><ui-label w="65">Under Defined</ui-label></div><div class="c"><ui-label w="77">Editing Assembly</ui-label></div><div class="d"><ui-label w="30">MMGS</ui-label></div>${icons('caret:20 tag:29')}`);

define('task-button', `
:host{display:flex;flex-direction:column;align-items:center;justify-content:center;position:relative;width:36.700px;height:34px;flex:none}
:host([active]){background:#303134;border-radius:4px;width:33px;margin:0 1.850px}
svg{overflow:visible}i{position:absolute;bottom:0;width:5px;height:2px;border-radius:1px;background:#999}:host([active]) i{width:13px;background:#5abdf0}`,
  el => `<svg width="20" height="20" viewBox="0 0 20 20">${BIG[el.getAttribute('name')]}</svg>${el.hasAttribute('run') ? '<i></i>' : ''}`);

define('task-bar', `
:host{display:flex;align-items:center;height:40px;background:#202124;border-top:1px solid #38393c;color:#f2f2f2;font-size:10px;padding-bottom:1px}
.weather{display:flex;flex:none;width:344.500px;padding-left:16px;align-items:center}.weather svg{overflow:visible;margin-right:3px}
.col{display:flex;flex-direction:column;gap:1px}
.search{display:flex;flex:none;align-items:center;width:183px;height:27px;border-radius:14px;background:#3c3d40;border:1px solid #4a4b4e;margin:0 2px 0 3px;padding-left:9px;font-size:11.500px;color:#ddd}.search ui-label{margin:1px 0 0 7px;flex:none;width:108px}.search task-button{height:24px}
.tray{display:flex;flex:none;align-items:center;margin-left:auto;padding-right:10px}
.r{align-items:flex-end;width:62px}.c{align-items:center;width:42px;gap:2px}
`, `<div class="weather"><svg width="24" height="26"><path d="M4 9h14M2 12h14M3 15h18" stroke="#8e929a" stroke-width="1.500"/><path d="M2 16h16a8.500 7 0 0 1-16 0z" fill="#efa12e"/><path d="M3 16h13" stroke="#8d7150"/><circle cx="17" cy="6.500" r="6.500" fill="#f58d9b"/><text x="14.500" y="10" font-family="Noto Sans" font-size="9.500" fill="#30171a">1</text></svg><div class="col"><ui-label w="21">25°C</ui-label><ui-label w="22" style="color:#c9c9c9">Haze</ui-label></div></div>
<task-button name="start"></task-button>
<div class="search"><svg width="14" height="14"><circle cx="6" cy="6" r="4.500" fill="none" stroke="#eee" stroke-width="1.500"/><path d="M9.500 9.500l3.500 3.500" stroke="#eee" stroke-width="1.500"/></svg><ui-label w="35">Search</ui-label><task-button name="beach"></task-button></div>
<task-button name="tasks"></task-button><task-button name="edge"></task-button><task-button name="files" run></task-button><task-button name="chrome"></task-button><task-button name="code"></task-button><task-button name="youtube"></task-button><task-button name="telegram"></task-button><task-button name="spotify"></task-button><task-button name="chrome2" run></task-button><task-button name="sw" run active></task-button>
<div class="tray"><sw-icon name="chev" w="24"></sw-icon><div class="col c"><ui-label w="20">ENG</ui-label><ui-label w="10">IN</ui-label></div>${icons('wifi:20 vol:19 batt:21')}<div class="col r"><ui-label w="25">00:57</ui-label><ui-label w="52">07-08-2024</ui-label></div>${icons('bell:26')}</div>`, (el, r) => { r.querySelector('.tray').style.paddingRight = '18px'; r.querySelector('.r').style.width = '61.500px'; });

define('cad-app', `:host{display:grid;grid-template-rows:28px 637px 15px 40px;width:1280px;height:720px;overflow:hidden;background:#f8f8f8}.mid{display:flex}.work{display:flex;flex-direction:column}`,
  `<title-bar></title-bar><div class="mid"><div class="work"><cad-viewport></cad-viewport><model-tabs></model-tabs></div><side-scroll></side-scroll></div><status-bar></status-bar><task-bar></task-bar>`);
</script>
</body>
</html>
